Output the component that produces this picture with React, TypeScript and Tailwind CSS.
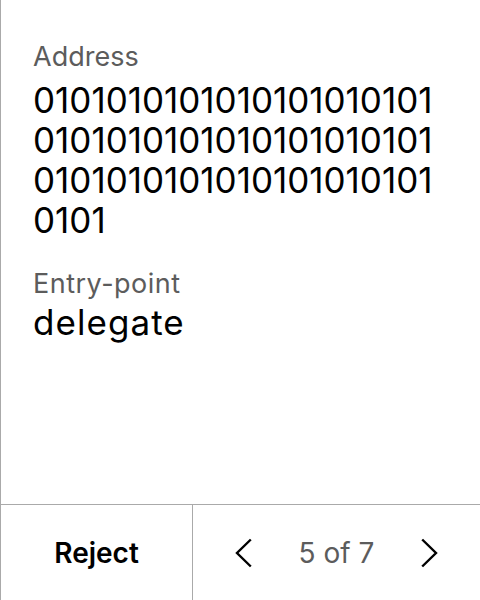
function Chevron({ dir }: { dir: "left" | "right" }) {
    return (
        <svg width="17" height="30" viewBox="0 0 17 30" fill="none" stroke="currentColor" strokeWidth="2.4" strokeLinejoin="miter">
            {dir === "left" ? <path d="M15.8 1.5 L2 15 L15.8 28.5" /> : <path d="M1.2 1.5 L15 15 L1.2 28.5" />}
        </svg>
    );
}

export default function App() {
    return (
        <div className="flex h-[600px] w-[480px] flex-col border-l border-[#aaaaaa] bg-white text-black [font-family:Inter,'Noto_Sans',sans-serif]">
            <div className="flex flex-1 flex-col pl-[32px] pr-[30px] pt-[41px]">
                <div className="text-[27px] leading-[32px] text-[#5c5c5c]">Address</div>
                <div className="mt-[7px] break-all text-[35px] leading-[40px]">
                    0101010101010101010101010101010101010101010101010101010101010101010101
                </div>
                <div className="mt-[28px] text-[27px] leading-[32px] tracking-[0.018em] text-[#5c5c5c]">Entry-point</div>
                <div className="mt-[2px] text-[35px] leading-[40px] tracking-[0.03em]">delegate</div>
            </div>
            <div className="flex h-[96px] border-t border-[#aaaaaa]">
                <button className="flex w-[192px] items-center justify-center border-r border-[#aaaaaa] text-[28px] font-semibold">
                    Reject
                </button>
                <div className="flex flex-1 items-center justify-between px-[42px]">
                    <Chevron dir="left" />
                    <span className="text-[28px] text-[#5c5c5c]">5 of 7</span>
                    <Chevron dir="right" />
                </div>
            </div>
        </div>
    );
}
